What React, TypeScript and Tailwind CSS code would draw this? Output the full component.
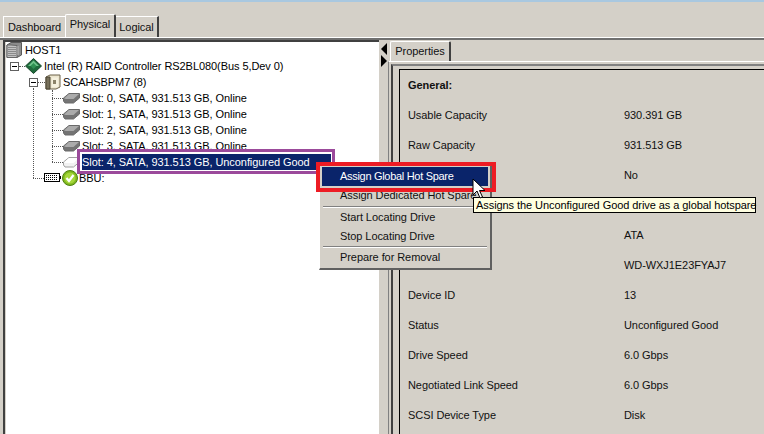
const font = "[font-family:'Liberation_Sans',Arial,sans-serif]";

function Server() {
  return (
    <svg width="17" height="16" viewBox="0 0 17 16" className="shrink-0">
      <path d="M1 3 L5 0.5 H15.5 V13 L11 15.5 H1 Z" fill="#8c8c8c" stroke="#5a5a5a" />
      <path d="M1 3 H5 L11 3.5 V15.5 H1 Z" fill="#c2c2c2" stroke="#666" />
      <path d="M2 5.5H10M2 7.5H10M2 9.5H10M2 11.5H10M2 13.5H10" stroke="#8a8a8a" />
      <path d="M12 4V13" stroke="#bbb" />
    </svg>
  );
}
function Diamond() {
  return (
    <svg width="17" height="16" viewBox="0 0 17 16" className="shrink-0">
      <path d="M8.5 0.5 L16.5 8 L8.5 15.5 L0.5 8 Z" fill="#1f6b3c" stroke="#16472a" />
      <path d="M8.5 2.5 L14 8 H3 Z" fill="#6fc48a" />
      <path d="M8.5 5 L11.5 8 L8.5 11 L5.5 8 Z" fill="#2f9152" />
    </svg>
  );
}
function Enclosure() {
  return (
    <svg width="16" height="16" viewBox="0 0 16 16" className="shrink-0">
      <path d="M1 3 L5 1 H15 V13 L11 15 H1 Z" fill="#ece6cf" stroke="#6a6048" />
      <path d="M1 3 H5 V15 H1 Z" fill="#77705a" stroke="#4a4433" />
      <path d="M7 3.5 H13 V13 H7 Z" fill="#f5f1df" />
      <path d="M8 6 H11 V10 H8 Z" fill="#8a8268" />
    </svg>
  );
}
function Disk({ light }: { light?: boolean }) {
  return (
    <svg width="17" height="12" viewBox="0 0 17 12" className="shrink-0">
      <path d="M0.5 6 L6 1.5 H16.5 V6 L10.5 11 H2 L0.5 9 Z" fill={light ? "#f2f2f2" : "#747474"} stroke={light ? "#a0a0a0" : "#6a6a6a"} />
      <path d="M1 6.5 L6 2 H16 L10.5 7 H3 Z" fill={light ? "#ffffff" : "#ababab"} />
    </svg>
  );
}
function Battery() {
  return (
    <svg width="17" height="10" viewBox="0 0 17 10" className="shrink-0">
      <rect x="0.5" y="0.5" width="15" height="8" fill="#fff" stroke="#000" />
      <path d="M2 2.5H14M2 4.5H14M2 6.5H14" stroke="#000" strokeDasharray="1 1" />
      <path d="M16.5 3V6" stroke="#000" />
    </svg>
  );
}
function Check() {
  return (
    <svg width="16" height="16" viewBox="0 0 16 16" className="shrink-0">
      <circle cx="8" cy="8" r="7.5" fill="#7fb81e" stroke="#4f8010" />
      <circle cx="8" cy="8" r="5.5" fill="#a5d63a" />
      <path d="M4.5 8 L7 11 L11.5 5" fill="none" stroke="#fff" strokeWidth="2.2" />
    </svg>
  );
}
function Toggle() {
  return (
    <span className="flex h-[9px] w-[9px] shrink-0 items-center justify-center border border-[#606060] bg-white">
      <span className="h-px w-[5px] bg-black" />
    </span>
  );
}
function Dots({ w }: { w: number }) {
  return <span className="h-0 shrink-0 border-t border-dotted border-[#555]" style={{ width: w }} />;
}

function Slot({ n, status }: { n: number; status: string }) {
  return (
    <div className="flex h-4 items-center pl-[46px]">
      <Dots w={11} />
      <span className="flex w-[19px] shrink-0 justify-start"><Disk /></span>
      <span className="whitespace-nowrap">Slot: {n}, SATA, 931.513 GB, {status}</span>
    </div>
  );
}

function Tree() {
  return (
    <div className="relative h-full flex-1 overflow-hidden bg-white text-black">
      <span className="absolute top-[46px] left-[27px] h-[90px] border-l border-dotted border-[#555]" />
      <span className="absolute top-[48px] left-[46px] h-[72px] border-l border-dotted border-[#555]" />
      <div className="flex h-4 items-center"><Server /><span className="ml-[2px]">HOST1</span></div>
      <div className="flex h-4 items-center pl-[4px]">
        <Toggle /><Dots w={6} /><Diamond /><span className="ml-[2px] whitespace-nowrap">Intel (R) RAID Controller RS2BL080(Bus 5,Dev 0)</span>
      </div>
      <div className="flex h-4 items-center pl-[23px]">
        <Toggle /><Dots w={7} /><Enclosure /><span className="ml-[2px] whitespace-nowrap">SCAHSBPM7 (8)</span>
      </div>
      <Slot n={0} status="Online" />
      <Slot n={1} status="Online" />
      <Slot n={2} status="Online" />
      <Slot n={3} status="Online" />
      <div className="flex h-4 items-center pl-[46px]">
        <Dots w={11} />
        <span className="flex w-[19px] shrink-0"><Disk light /></span>
        <span className="flex h-4 w-[249px] items-center whitespace-nowrap bg-[#0a246a] text-white">Slot: 4, SATA, 931.513 GB, Unconfigured Good</span>
      </div>
      <div className="flex h-4 items-center pl-[27px]">
        <Dots w={11} /><Battery /><span className="ml-px"><Check /></span><span className="ml-px">BBU:</span>
      </div>
    </div>
  );
}

const rows: [string, string][] = [
  ["Usable Capacity", "930.391 GB"],
  ["Raw Capacity", "931.513 GB"],
  ["", "No"],
  ["", ""],
  ["", "ATA"],
  ["", "WD-WXJ1E23FYAJ7"],
  ["Device ID", "13"],
  ["Status", "Unconfigured Good"],
  ["Drive Speed", "6.0 Gbps"],
  ["Negotiated Link Speed", "6.0 Gbps"],
  ["SCSI Device Type", "Disk"],
];

function Props() {
  return (
    <div className="flex min-w-0 flex-1 flex-col pt-[1px]">
      <div className="flex h-[20px] pl-[2px]">
        <div className="flex h-[20px] w-[61px] items-center justify-center rounded-t-[2px] border-t border-l border-t-white border-l-white border-r-2 border-r-[#404040]">Properties</div>
      </div>
      <div className="flex-1 border-t border-l border-t-white border-l-[#808080] pt-[2px] pl-[2px]">
        <div className="h-full border-t-2 border-l-2 border-t-[#808080] border-l-[#404040] pt-[3px] pl-[6px]">
          <div className="h-full border-t border-l border-black pl-[8px]">
            <div className="flex h-[30px] items-center font-bold">General:</div>
            {rows.map(([k, v], i) => (
              <div key={i} className="flex h-[30px] items-center">
                <span className="w-[216px] shrink-0">{k}</span>
                <span>{v}</span>
              </div>
            ))}
          </div>
        </div>
      </div>
    </div>
  );
}

function Item({ label, active, tight }: { label: string; active?: boolean; tight?: boolean }) {
  return (
    <div className={`flex h-[19px] items-center pl-[18px] whitespace-nowrap ${active ? "bg-[#0a246a] text-white" : ""} ${tight ? "tracking-[-0.3px]" : ""}`}>{label}</div>
  );
}
function Sep({ first }: { first?: boolean }) {
  return <div className={`mx-px h-[2px] border-t border-b border-t-[#808080] border-b-white ${first ? "mt-px" : ""}`} />;
}

export default function App() {
  return (
    <div className={`relative h-[434px] w-[764px] overflow-hidden bg-[#d4d0c8] text-[11px] leading-none tracking-[-0.07px] text-[#111] ${font}`}>
      <div className="h-[2px] bg-[#a9c8e0]" />
      <div className="flex h-[35px] items-end pl-[3px]">
        <div className="flex h-[21px] w-[62px] items-center justify-center border-t border-l border-white">Dashboard</div>
        <div className="flex h-[23px] w-[51px] items-start justify-center rounded-t-[2px] border-t border-l border-r-2 border-t-white border-l-white border-r-[#404040] pt-[4px]">Physical</div>
        <div className="flex h-[21px] w-[43px] items-center justify-center border-t border-r-2 border-t-white border-r-[#404040]">Logical</div>
      </div>
      <div className="h-[3px] border-t border-b-2 border-t-white border-b-[#707070]" />
      <div className="flex h-[394px]">
        <div className="flex w-[379px] shrink-0 pl-[3px]">
          <div className="flex flex-1 border-t-2 border-l-2 border-t-[#404040] border-l-[#404040] pl-px">
            <Tree />
          </div>
        </div>
        <div className="flex w-[9px] shrink-0 flex-col items-start pt-[3px] pl-[2px]">
          <span className="h-0 w-0 border-y-[6px] border-r-[6px] border-y-transparent border-r-black" />
          <span className="h-0 w-0 border-y-[6px] border-l-[6px] border-y-transparent border-l-black" />
        </div>
        <Props />
      </div>

      <div className="absolute top-[149px] left-[77px] h-[25px] w-[258px] border-[3px] border-[#9b4a9b]" />

      <div className="absolute top-[163px] left-[319px] w-[173px] border-t border-l border-t-white border-l-white border-r-2 border-b-2 border-r-[#606060] border-b-[#606060] bg-[#d4d0c8] px-[2px] pt-[3px] pb-px">
        <Item label="Assign Global Hot Spare" active tight />
        <Item label="Assign Dedicated Hot Spare" />
        <Sep first />
        <Item label="Start Locating Drive" />
        <Item label="Stop Locating Drive" />
        <Sep />
        <Item label="Prepare for Removal" />
      </div>
      <div className="absolute top-[162px] left-[316px] h-[30px] w-[180px] border-4 border-[#ed1c24]" />

      <div className="absolute top-[197px] left-[473px] flex h-[16px] w-[283px] items-center border border-black bg-[#ffffe1] pl-[2px] whitespace-nowrap text-black">
        Assigns the Unconfigured Good drive as a global hotspare
      </div>

      <svg width="14" height="22" viewBox="0 0 14 22" className="absolute top-[178px] left-[472px]">
        <path d="M1 1 V17 L5 13 L8 20 L10.5 19 L7.5 12.5 H13 Z" fill="#fff" stroke="#000" />
      </svg>
    </div>
  );
}
